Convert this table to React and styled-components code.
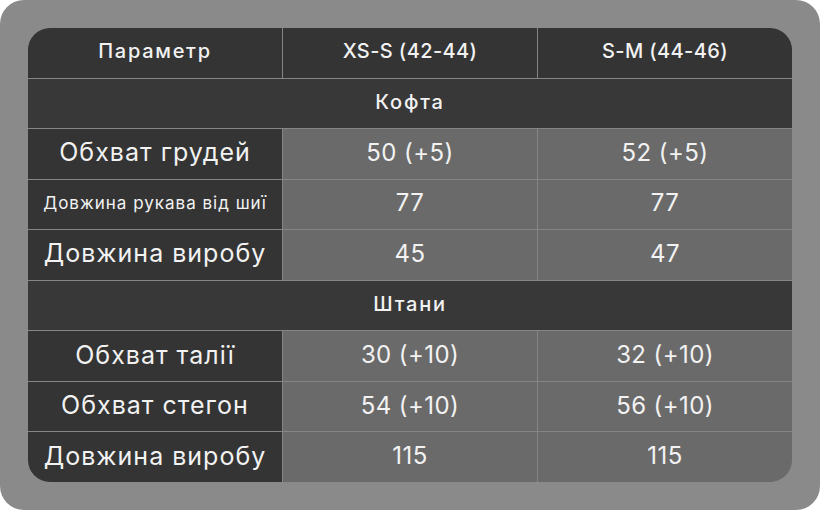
import React from 'react';
import styled, { createGlobalStyle } from 'styled-components';

const GlobalStyle = createGlobalStyle`
  html, body {
    margin: 0;
    padding: 0;
    background: #ffffff;
  }
  body {
    font-family: Inter, "Noto Sans", sans-serif;
  }
`;

const Card = styled.div`
  width: 820px;
  height: 510px;
  box-sizing: border-box;
  padding: 28px;
  background: #8a8a8a;
  border-radius: 24px;
`;

const Table = styled.div`
  height: 454px;
  display: grid;
  grid-template-columns: 254px 1fr 1fr;
  grid-template-rows: repeat(9, 1fr);
  gap: 1px;
  background: #858585;
  border-radius: 22px;
  overflow: hidden;
`;

const Cell = styled.div`
  display: flex;
  align-items: center;
  justify-content: center;
  padding-bottom: 3px;
  background: ${(p) => (p.$light ? '#6a6a6a' : '#343434')};
  color: #f2f2f2;
  font-size: ${(p) => p.$size || 24}px;
  font-weight: ${(p) => p.$weight || 400};
  letter-spacing: ${(p) => (p.$spacing === undefined ? 0.4 : p.$spacing)}px;
  white-space: nowrap;
`;

const Section = styled(Cell)`
  grid-column: 1 / -1;
  background: #383838;
  font-size: 20px;
  font-weight: 500;
  letter-spacing: 1.8px;
`;

const groups = [
  {
    title: 'Кофта',
    rows: [
      { label: 'Обхват грудей', a: '50 (+5)', b: '52 (+5)' },
      { label: 'Довжина рукава від шиї', a: '77', b: '77', small: true },
      { label: 'Довжина виробу', a: '45', b: '47' },
    ],
  },
  {
    title: 'Штани',
    rows: [
      { label: 'Обхват талії', a: '30 (+10)', b: '32 (+10)' },
      { label: 'Обхват стегон', a: '54 (+10)', b: '56 (+10)' },
      { label: 'Довжина виробу', a: '115', b: '115' },
    ],
  },
];

const App = () => {
  return (
    <>
      <GlobalStyle />
      <Card>
        <Table>
          <Cell $size={20} $weight={500} $spacing={1.7}>Параметр</Cell>
          <Cell $size={20} $weight={500}>XS-S (42-44)</Cell>
          <Cell $size={20} $weight={500}>S-M (44-46)</Cell>
          {groups.map((g) => (
            <React.Fragment key={g.title}>
              <Section>{g.title}</Section>
              {g.rows.map((r) => (
                <React.Fragment key={r.label}>
                  <Cell $size={r.small ? 17 : 25} $spacing={1}>{r.label}</Cell>
                  <Cell $light>{r.a}</Cell>
                  <Cell $light>{r.b}</Cell>
                </React.Fragment>
              ))}
            </React.Fragment>
          ))}
        </Table>
      </Card>
    </>
  );
};

export default App;
